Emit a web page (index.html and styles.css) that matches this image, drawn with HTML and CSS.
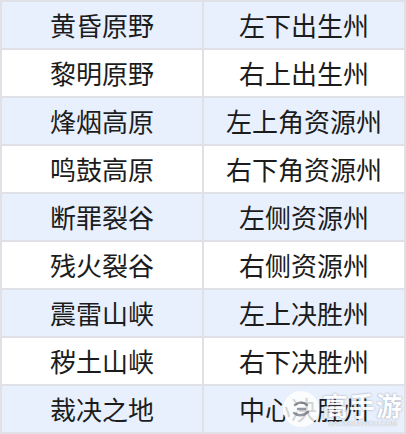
FILE: index.html
```html
<!DOCTYPE html>
<html>
<head>
<meta charset="utf-8">
<link rel="stylesheet" href="styles.css">
</head>
<body>
<div class="wrap">
<table class="map">
<tr><td>黄昏原野</td><td>左下出生州</td></tr>
<tr><td>黎明原野</td><td>右上出生州</td></tr>
<tr><td>烽烟高原</td><td>左上角资源州</td></tr>
<tr><td>鸣鼓高原</td><td>右下角资源州</td></tr>
<tr><td>断罪裂谷</td><td>左侧资源州</td></tr>
<tr><td>残火裂谷</td><td>右侧资源州</td></tr>
<tr><td>震雷山峡</td><td>左上决胜州</td></tr>
<tr><td>秽土山峡</td><td>右下决胜州</td></tr>
<tr><td>裁决之地</td><td>中心决胜州</td></tr>
</table>
<div class="mark">
<div class="logo"><svg width="38" height="38" viewBox="0 0 38 38"><circle cx="19" cy="19" r="18" fill="#fff" fill-opacity="0.9"/><path d="M13 15 q6 -5 12 0 M12 23 q7 5 14 -1 M16 19 h7" stroke="#8a8f99" stroke-width="2.4" fill="none" stroke-linecap="round"/></svg></div>
<div class="brand"><span class="cn">高手游</span><span class="en">GAOSHOUYOU.COM</span></div>
</div>
</div>
</body>
</html>
```
FILE: styles.css
```css
html, body { margin: 0; padding: 0; background: #fff; }
.wrap { position: relative; width: 406px; height: 434px; overflow: hidden; }
.map {
  border-collapse: collapse;
  width: 406px;
  table-layout: fixed;
  font-family: "Noto Sans CJK SC", "Noto Sans", sans-serif;
  font-size: 26px;
  color: #1c1c1c;
}
.map td {
  border: 2px solid #dfe1e6;
  height: 46px;
  padding: 0;
  text-align: center;
  vertical-align: middle;
  line-height: 46px;
}
.map tr:nth-child(odd) td { background: #e8f0fd; }
.map tr:nth-child(even) td { background: #ffffff; }
.mark {
  position: absolute;
  left: 282px;
  top: 390px;
  display: flex;
  align-items: center;
  gap: 2px;
  opacity: 0.9;
}
.logo { width: 38px; height: 38px; }
.brand { display: flex; flex-direction: column; align-items: center; }
.cn {
  font-family: "Noto Sans CJK SC", sans-serif;
  font-size: 26px;
  font-weight: 700;
  line-height: 30px;
  color: #fff;
  letter-spacing: 1px;
  text-shadow: 0 0 2px rgba(90,95,110,0.7);
}
.en {
  font-family: "Liberation Sans", sans-serif;
  font-size: 7px;
  line-height: 8px;
  color: #fff;
  text-shadow: 0 0 1px rgba(90,95,110,0.8);
}
```
